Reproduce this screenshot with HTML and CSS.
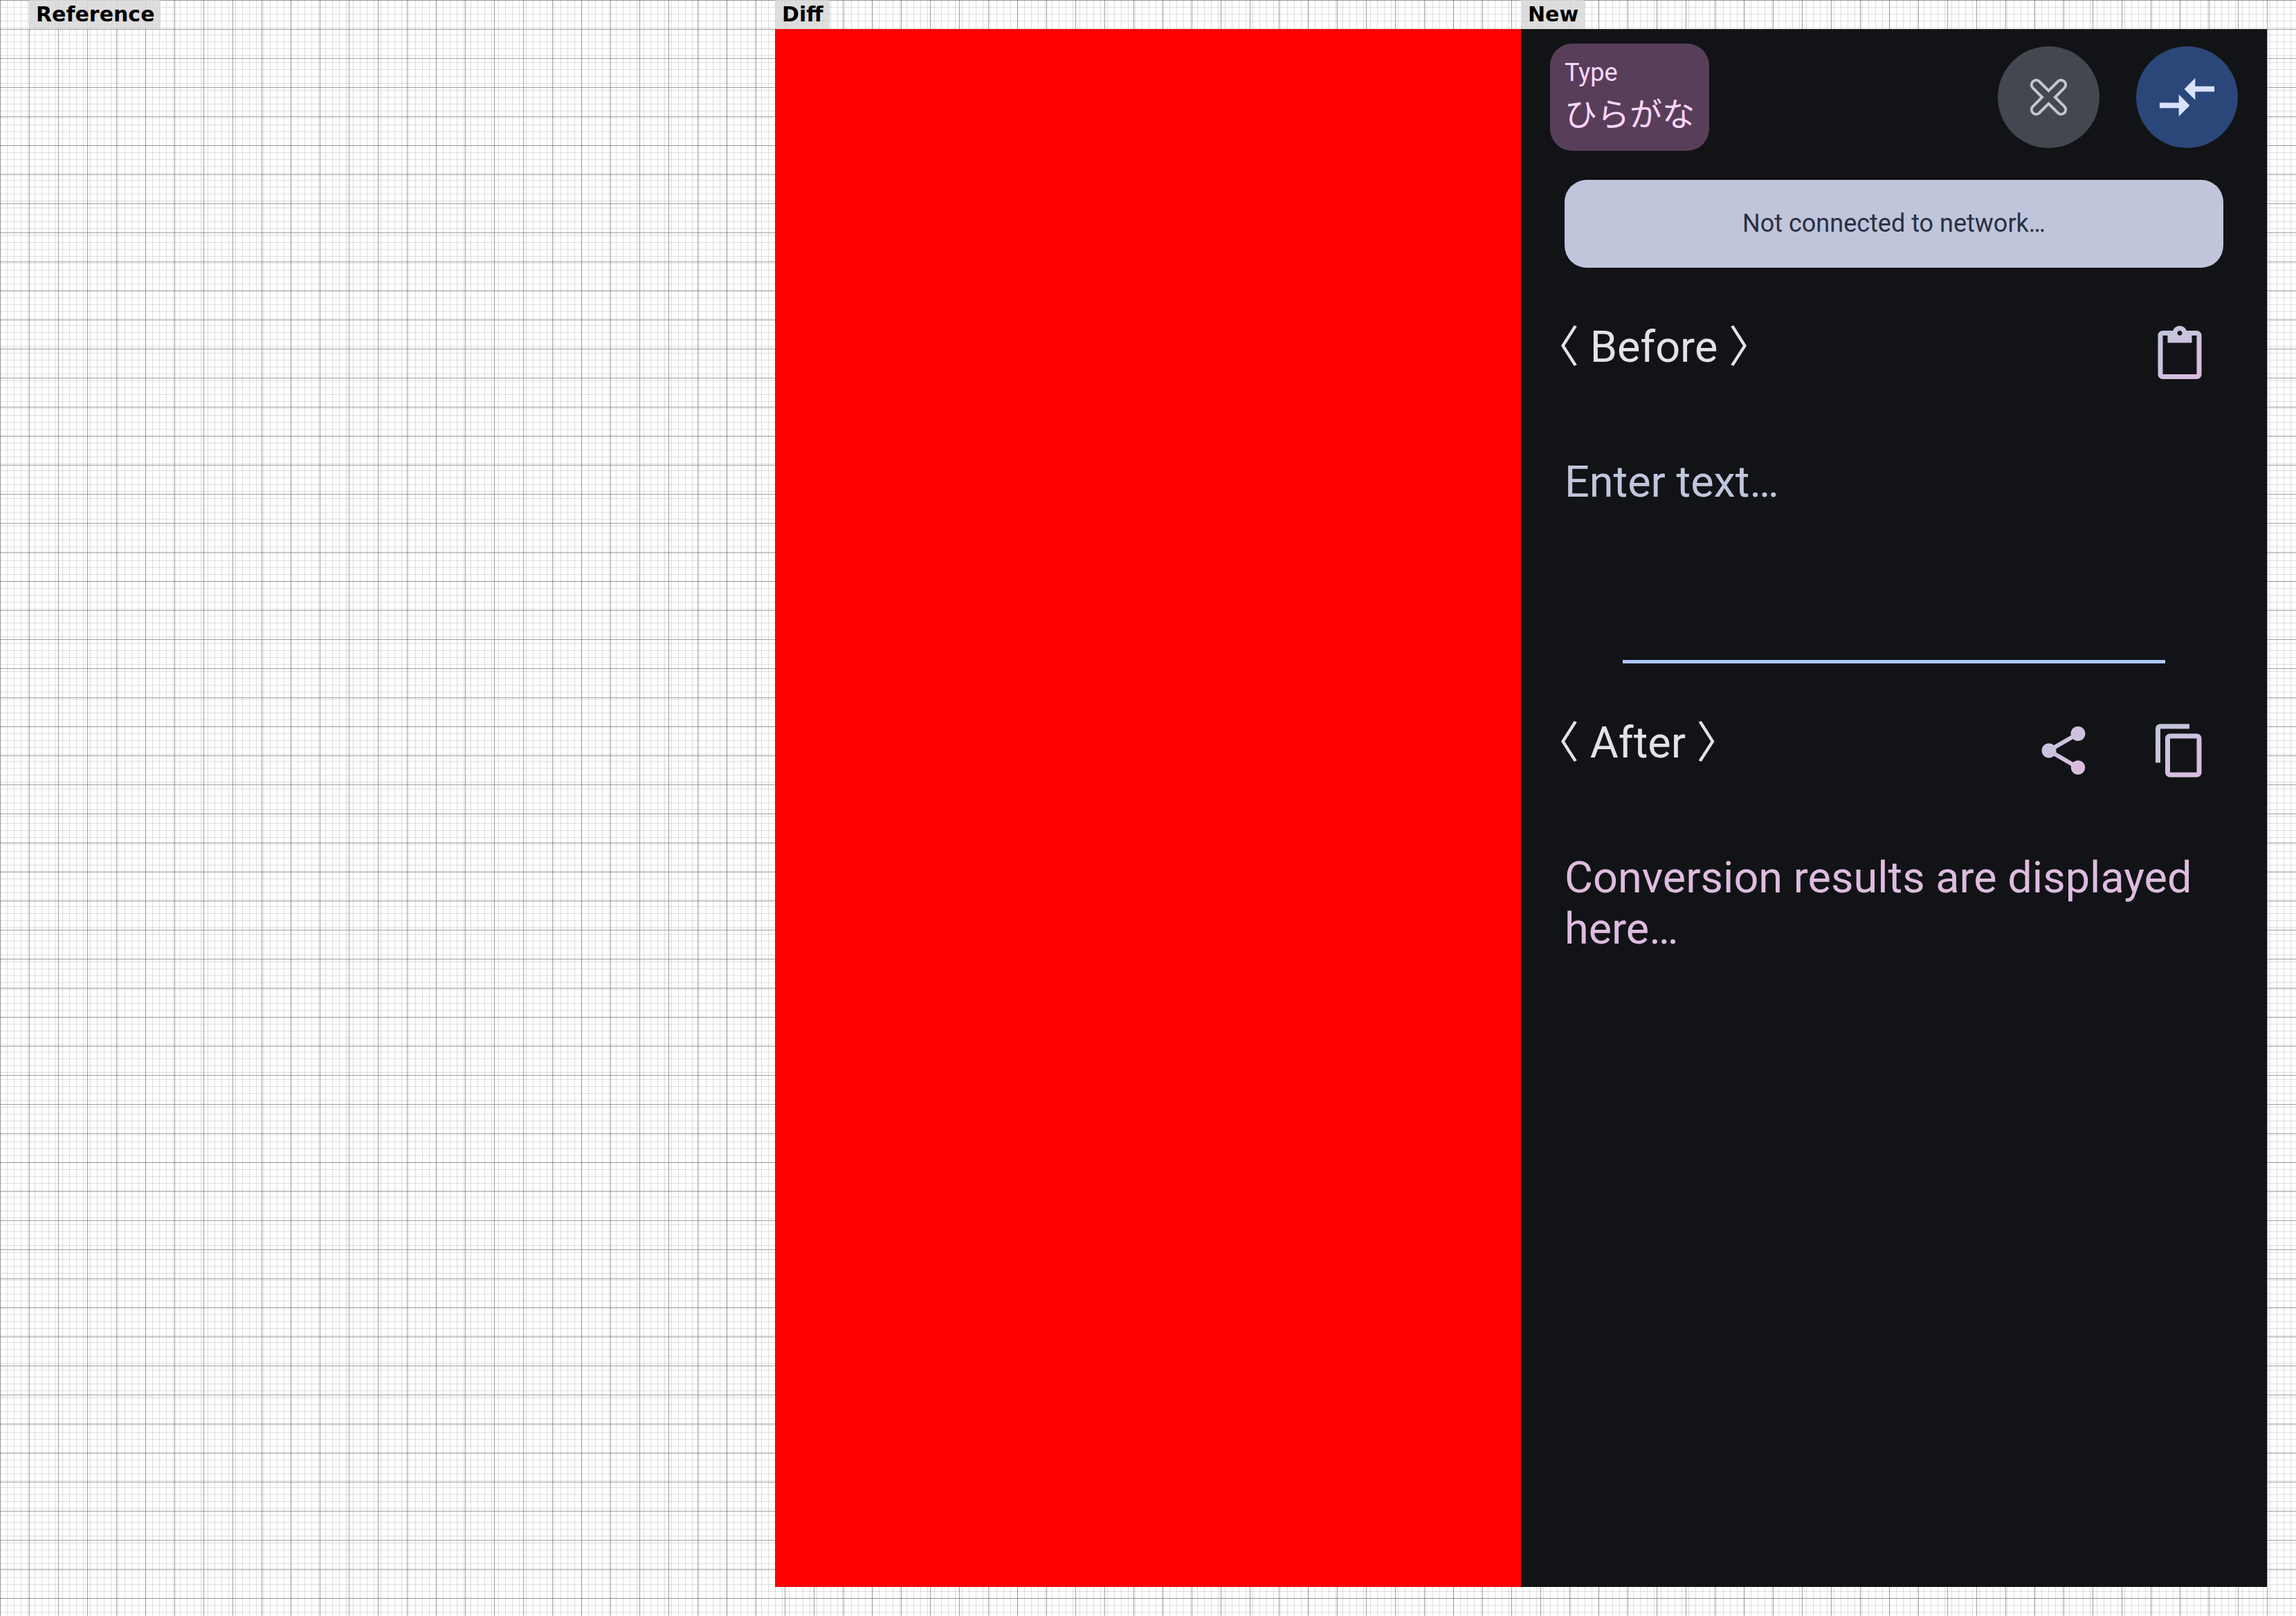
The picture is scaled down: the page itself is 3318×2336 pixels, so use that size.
FILE: index.html
```html
<!DOCTYPE html>
<html lang="en">
<head>
<meta charset="utf-8">
<title>Screenshot comparison</title>
<link rel="stylesheet" href="styles.css">
</head>
<body>
<main class="compare">
  <section class="pane">
    <h2 class="pane-label">Reference</h2>
    <div class="shot"></div>
  </section>
  <section class="pane">
    <h2 class="pane-label">Diff</h2>
    <div class="shot shot-diff"></div>
  </section>
  <section class="pane">
    <h2 class="pane-label">New</h2>
    <div class="shot app">
      <header class="app-bar">
        <div class="type-card">
          <label class="type-label" for="type">Type</label>
          <select class="type-select" id="type" lang="ja"><option>ひらがな</option></select>
        </div>
        <div class="app-actions">
          <button class="round-button round-clear" type="button" aria-label="Clear">
            <svg class="icon-large" viewBox="-48 -48 96 96" fill="none" stroke="currentColor" stroke-width="4"><path d="M0-9.5L14.1-23.5A6.7 6.7 0 0 1 23.5-14.1L9.5 0L23.5 14.1A6.7 6.7 0 0 1 14.1 23.5L0 9.5L-14.1 23.5A6.7 6.7 0 0 1-23.5 14.1L-9.5 0L-23.5-14.1A6.7 6.7 0 0 1-14.1-23.5Z"/></svg>
          </button>
          <button class="round-button round-convert" type="button" aria-label="Convert">
            <svg class="icon-large" viewBox="0 0 24 24" fill="currentColor"><path d="M9.01 14H2v2h7.01v3L13 15l-3.99-4v3zm5.98-1v-3H22V8h-7.01V5L11 9l3.99 4z"/></svg>
          </button>
        </div>
      </header>
      <p class="banner" role="status">Not connected to network…</p>
      <section class="block">
        <div class="block-head">
          <h3 class="block-title" lang="ja"><label for="source">〈 Before 〉</label></h3>
          <button class="icon-button" type="button" aria-label="Paste">
            <svg class="icon" viewBox="0 0 24 24" fill="url(#tint)">
              <defs><linearGradient id="tint" gradientUnits="userSpaceOnUse" x1="2" y1="2" x2="22" y2="22"><stop offset="0" stop-color="#bfc6dc"/><stop offset="1" stop-color="#debcdf"/></linearGradient></defs>
              <path d="M19 2h-4.18C14.4.84 13.3 0 12 0c-1.3 0-2.4.84-2.82 2H5c-1.1 0-2 .9-2 2v16c0 1.1.9 2 2 2h14c1.1 0 2-.9 2-2V4c0-1.1-.9-2-2-2zm-7 0c.55 0 1 .45 1 1s-.45 1-1 1-1-.45-1-1 .45-1 1-1zm7 18H5V4h2v3h10V4h2v16z"/>
            </svg>
          </button>
        </div>
        <textarea class="source" id="source" rows="3" placeholder="Enter text…"></textarea>
      </section>
      <hr class="divider">
      <section class="block">
        <div class="block-head">
          <h3 class="block-title" lang="ja">〈 After 〉</h3>
          <button class="icon-button" type="button" aria-label="Share">
            <svg class="icon" viewBox="0 0 24 24" fill="url(#tint)"><path d="M18 16.08c-.76 0-1.44.3-1.96.77L8.91 12.7c.05-.23.09-.46.09-.7s-.04-.47-.09-.7l7.05-4.11c.54.5 1.25.81 2.04.81 1.66 0 3-1.34 3-3s-1.34-3-3-3-3 1.34-3 3c0 .24.04.47.09.7L8.04 9.81C7.5 9.31 6.79 9 6 9c-1.66 0-3 1.34-3 3s1.34 3 3 3c.79 0 1.5-.31 2.04-.81l7.12 4.16c-.05.21-.08.43-.08.65 0 1.61 1.31 2.92 2.92 2.92 1.61 0 2.92-1.31 2.92-2.92s-1.31-2.92-2.92-2.92z"/></svg>
          </button>
          <button class="icon-button" type="button" aria-label="Copy">
            <svg class="icon" viewBox="0 0 24 24" fill="url(#tint)"><path d="M16 1H4c-1.1 0-2 .9-2 2v14h2V3h12V1zm3 4H8c-1.1 0-2 .9-2 2v14c0 1.1.9 2 2 2h11c1.1 0 2-.9 2-2V7c0-1.1-.9-2-2-2zm0 16H8V7h11v14z"/></svg>
          </button>
        </div>
        <p class="result">Conversion results are displayed here…</p>
      </section>
    </div>
  </section>
</main>
</body>
</html>
```
FILE: styles.css
```css
* {
  box-sizing: border-box;
}

body,
h2,
h3,
p {
  margin: 0;
}

body {
  --major: rgba(100, 100, 100, 0.6);
  --minor: rgba(128, 128, 128, 0.25);
  background:
    repeating-linear-gradient(to right, var(--major) 0 1px, transparent 1px 42px),
    repeating-linear-gradient(to bottom, var(--major) 0 1px, transparent 1px 42px),
    repeating-linear-gradient(to right, var(--minor) 0 1px, transparent 1px 10px),
    repeating-linear-gradient(to bottom, var(--minor) 0 1px, transparent 1px 10px),
    #fff;
}

.compare {
  display: grid;
  grid-template-columns: repeat(3, 1fr);
  min-height: 100vh;
  padding: 0 42px 42px;
}

.pane {
  display: flex;
  flex-direction: column;
  align-items: flex-start;
}

.pane-label {
  padding: 0 9px 0 10px;
  background: rgba(216, 216, 216, 0.85);
  color: #000;
  font: bold 30px/42px "DejaVu Sans", sans-serif;
}

.shot {
  flex: 1;
  width: 100%;
}

.shot-diff {
  background: #f00;
}

/* App screen */
.app {
  padding: 21px 0 42px;
  background: #121316;
  color: #e3e2e6;
  font-family: Roboto, "Noto Sans CJK JP", sans-serif;
  font-size: 63px;
  line-height: 74px;
}

.app-bar {
  display: flex;
  align-items: center;
  justify-content: space-between;
  padding: 0 42px;
}

.type-card {
  display: flex;
  flex-direction: column;
  padding: 21px;
  border-radius: 32px;
  background: #593e5a;
  color: #fcd7fb;
}

.type-label {
  font-size: 36px;
  line-height: 43px;
}

.type-select {
  appearance: none;
  height: 70px;
  padding: 0;
  border: 0;
  background: none;
  color: inherit;
  font: 47px/70px "Noto Sans CJK JP", sans-serif;
}

.app-actions {
  display: flex;
  gap: 53px;
}

.round-button,
.icon-button {
  display: flex;
  align-items: center;
  justify-content: center;
  flex: none;
  padding: 0;
  border: 0;
  border-radius: 50%;
  background: none;
}

.round-button {
  width: 147px;
  height: 147px;
}

.round-clear {
  background: #44474f;
  color: #c4c6d0;
}

.round-convert {
  background: #2b4678;
  color: #d8e2ff;
}

.icon-large {
  width: 95px;
  height: 95px;
}

.banner {
  margin: 42px 63px 63px;
  padding: 42px;
  border-radius: 32px;
  background: #c0c5dc;
  color: #293041;
  font-size: 36px;
  line-height: 43px;
  text-align: center;
}

.block-head {
  display: flex;
  gap: 42px;
  padding: 0 63px 0 21px;
}

.block-title {
  flex: 1;
  padding-top: 15px;
  font-size: 63px;
  font-weight: 400;
  line-height: 74px;
}

.icon-button {
  width: 126px;
  height: 126px;
}

.icon {
  width: 84px;
  height: 84px;
}

.source {
  display: block;
  width: 100%;
  height: 315px;
  padding: 84px 63px 0;
  border: 0;
  background: none;
  color: #bfc6dc;
  font: inherit;
  resize: none;
}

.source::placeholder {
  color: #bfc6dc;
  opacity: 1;
}

.divider {
  height: 5px;
  margin: 63px 147px;
  border: 0;
  background: #adc6ff;
}

.result {
  padding: 84px 63px 0;
  color: #debcdf;
}
```
